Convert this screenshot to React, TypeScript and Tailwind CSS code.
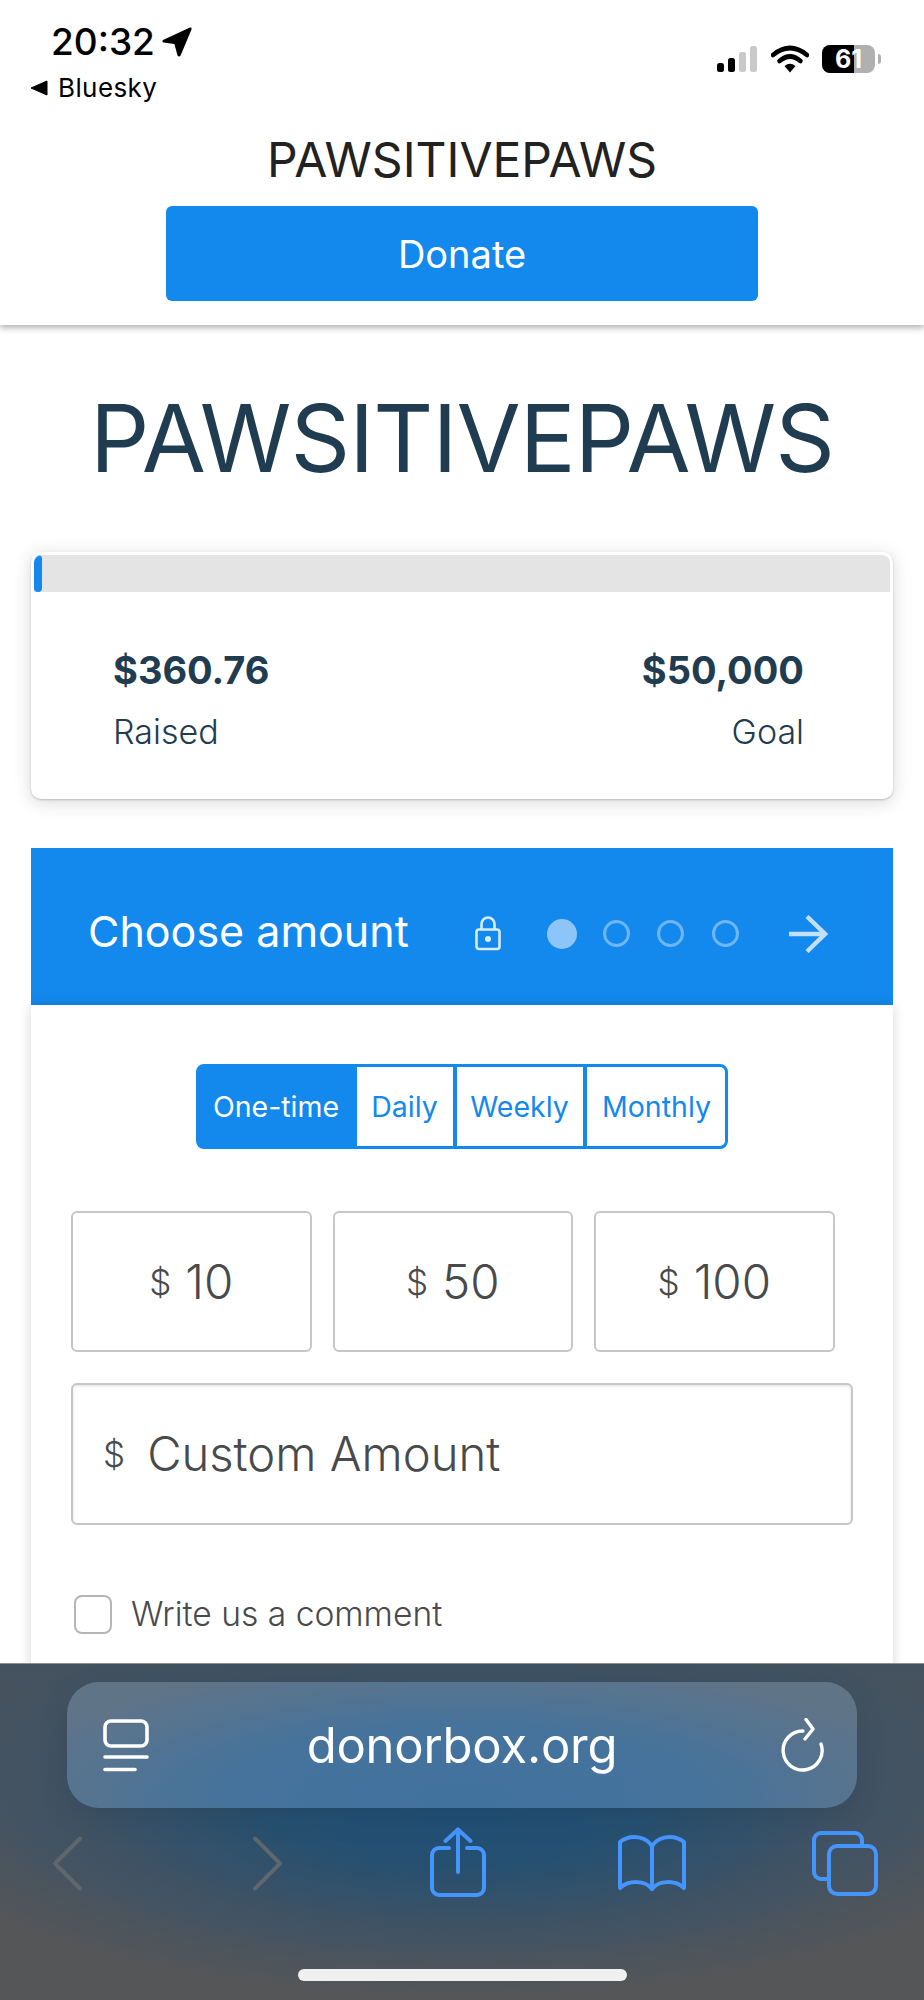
import React from "react";

const amounts = ["10", "50", "100"];

function StatusBar() {
  return (
    <div className="flex justify-between h-[130px]">
      <div className="pl-[30px] pt-[21px]">
        <div className="flex items-center pl-[21px] gap-[7px] h-[42px]">
          <span className="text-[37px] leading-[42px] font-medium text-black">20:32</span>
          <svg width="30" height="30" viewBox="0 0 29 29">
            <path d="M27 0.5 L1 12.5 Q-0.5 14 1.5 15 L12 16.5 L15 27.5 Q16.5 29.5 18 27.5 L28.5 2.5 Q29 0 27 0.5 Z" fill="#000" />
          </svg>
        </div>
        <div className="flex items-center gap-[10px] h-[32px] mt-[9px]">
          <svg width="18" height="16" viewBox="0 0 18 16">
            <path d="M17 1 V15 L1 8 Z" fill="#000" stroke="#000" strokeLinejoin="round" />
          </svg>
          <span className="text-[26px] leading-[32px] tracking-[0.4px] text-black">Bluesky</span>
        </div>
      </div>
      <div className="flex items-start gap-[13px] pt-[45px] pr-[43px]">
        <svg width="41" height="28" viewBox="0 0 41 28">
          <rect x="0" y="18" width="7" height="9" rx="2.5" fill="#000" />
          <rect x="11" y="13" width="7" height="14" rx="2.5" fill="#000" />
          <rect x="22" y="7" width="7" height="20" rx="2.5" fill="#c9c9c9" />
          <rect x="33" y="1" width="7" height="26" rx="2.5" fill="#c9c9c9" />
        </svg>
        <svg width="38" height="28" viewBox="0 0 38 28">
          <path d="M2 10 Q19 -4 36 10" fill="none" stroke="#000" strokeWidth="4.6" strokeLinecap="round" />
          <path d="M8.5 16 Q19 7 29.5 16" fill="none" stroke="#000" strokeWidth="4.6" strokeLinecap="round" />
          <path d="M13.5 21 L19 27.5 L24.5 21 Q19 16.5 13.5 21 Z" fill="#000" />
        </svg>
        <div className="flex items-center gap-[3px]">
          <div className="relative w-[53px] h-[28px] rounded-[8px] overflow-hidden bg-[#b0b0b0] flex items-center justify-center">
            <div className="absolute left-0 top-0 bottom-0 w-[32px] bg-black" />
            <span className="relative text-[25px] leading-[28px] font-bold text-white">61</span>
          </div>
          <div className="w-[3px] h-[10px] rounded-r-full bg-[#b0b0b0]" />
        </div>
      </div>
    </div>
  );
}

function Header() {
  return (
    <div className="h-[325px] bg-white shadow-[0_3px_6px_rgba(0,0,0,0.3)] relative flex flex-col items-center">
      <div className="w-full">
        <StatusBar />
      </div>
      <h2 className="text-[48px] leading-[56px] font-normal text-[#222] mt-[2px]">PAWSITIVEPAWS</h2>
      <button className="mt-[18px] w-[592px] h-[95px] rounded-[6px] bg-[#1389ee] text-white text-[38px] leading-[46px]">
        Donate
      </button>
    </div>
  );
}

function ProgressCard() {
  return (
    <div className="mx-[31px] mt-[54px] h-[247px] rounded-[10px] bg-white p-[3px] shadow-[0_3px_18px_rgba(0,0,0,0.16),0_1px_2px_rgba(0,0,0,0.2)]">
      <div className="h-[37px] rounded-t-[8px] bg-[#e4e4e4] overflow-hidden">
        <div className="w-[8px] h-full rounded-[5px] bg-[#1389ee]" />
      </div>
      <div className="flex justify-between pl-[79px] pr-[86px] pt-[55px] text-[#1f3c50]">
        <div>
          <div className="text-[38px] leading-[46px] font-bold">$360.76</div>
          <div className="text-[34px] leading-[40px] mt-[19px] font-light">Raised</div>
        </div>
        <div className="text-right">
          <div className="text-[38px] leading-[46px] font-bold">$50,000</div>
          <div className="text-[34px] leading-[40px] mt-[19px] font-light">Goal</div>
        </div>
      </div>
    </div>
  );
}

function Stepper() {
  return (
    <div className="h-[157px] bg-[#1389ee] flex items-center pl-[57px]">
      <span className="text-[43px] leading-[52px] text-white w-[387px] mt-[9px]">Choose amount</span>
      <svg className="mt-[14px]" width="26" height="35" viewBox="0 0 26 34" fill="none" stroke="#d9ecfd" strokeWidth="2.6">
        <rect x="1.5" y="13" width="23" height="19.5" rx="2.5" />
        <path d="M6.5 13 V7.5 a6.5 6.5 0 0 1 13 0 V13" />
        <circle cx="13" cy="22.5" r="3" fill="#d9ecfd" stroke="none" />
      </svg>
      <div className="ml-[46px] mt-[14px] flex items-center gap-[27.5px]">
        <div className="w-[30px] h-[30px] rounded-full bg-[#8ec5f8] -mr-[2px]" />
        <div className="w-[27px] h-[27px] rounded-full border-[3px] border-[#6fb6f6]" />
        <div className="w-[27px] h-[27px] rounded-full border-[3px] border-[#6fb6f6]" />
        <div className="w-[27px] h-[27px] rounded-full border-[3px] border-[#6fb6f6]" />
      </div>
      <svg className="ml-[50px] mt-[14px]" width="39" height="38" viewBox="0 0 39 38" fill="none" stroke="#c3e0fb" strokeWidth="4.4">
        <path d="M0 19 H36" />
        <path d="M18 1.5 L36 19 L18 36.5" />
      </svg>
    </div>
  );
}

function FrequencyTabs() {
  return (
    <div className="flex justify-center text-[28.5px] leading-[35px]">
      <div className="flex h-[85px] w-[532px] border-[3px] border-[#1389ee] rounded-[8px] overflow-hidden bg-[#1389ee] gap-[4px] text-[#1389ee]">
        <div className="w-[154px] flex items-center justify-center text-white pl-[1px]">One-time</div>
        <div className="w-[96px] flex items-center justify-center bg-white">Daily</div>
        <div className="w-[126px] flex items-center justify-center bg-white">Weekly</div>
        <div className="flex-1 flex items-center justify-center bg-white pl-[2px]">Monthly</div>
      </div>
    </div>
  );
}

function AmountForm() {
  return (
    <div className="bg-white pl-[40px] pt-[59px] h-[700px] shadow-[0_0_12px_rgba(0,0,0,0.16)] text-[#484a4c]">
      <div className="mr-[41px]">
        <FrequencyTabs />
      </div>
      <div className="flex gap-[21px] mt-[62px]">
        {amounts.map((a) => (
          <div
            key={a}
            className="w-[240.5px] h-[141px] rounded-[6px] border-[2px] border-[#c6c6c6] flex items-center justify-center gap-[14px] font-light"
          >
            <span className="text-[35px] leading-[42px]">$</span>
            <span className="text-[47.5px] leading-[56px]">{a}</span>
          </div>
        ))}
      </div>
      <div className="mt-[31px] w-[782px] h-[142px] rounded-[6px] border-[2px] border-[#c6c6c6] shadow-[inset_0_1px_3px_rgba(0,0,0,0.12)] flex items-center pl-[30px] gap-[22px] font-light">
        <span className="text-[35px] leading-[42px]">$</span>
        <span className="text-[47.2px] leading-[58px]">Custom Amount</span>
      </div>
      <div className="mt-[68px] ml-[3px] flex items-center gap-[19px]">
        <div className="w-[38px] h-[39px] rounded-[8px] border-[2px] border-[#b5b5b5]" />
        <span className="text-[33.6px] leading-[42px] font-light">Write us a comment</span>
      </div>
    </div>
  );
}

function SafariBar() {
  return (
    <div className="absolute left-0 right-0 bottom-0 h-[337px] border-t border-[#8d8f91] bg-[#555658] bg-[radial-gradient(ellipse_580px_190px_at_50%_42%,#1e4f79_0%,#28506f_35%,rgba(60,82,102,0.85)_65%,rgba(85,86,88,0)_100%),linear-gradient(180deg,#44525f_0%,#4c545c_35%,#555658_70%)]">
      <div className="mx-[67px] mt-[18px] h-[126px] rounded-[32px] bg-[radial-gradient(ellipse_470px_135px_at_50%_90%,#41729e_0%,#45739c_50%,#607488_100%)] shadow-[0_8px_26px_rgba(30,50,70,0.22)] flex items-center justify-between pl-[36px] pr-[33px] relative">
        <svg className="mt-[2px]" width="46" height="54" viewBox="0 0 46 54" fill="none" stroke="#fff">
          <rect x="2" y="2" width="42" height="25" rx="6" strokeWidth="3.6" />
          <path d="M2 38 H44" strokeWidth="3.6" strokeLinecap="round" />
          <path d="M2 50.5 H32" strokeWidth="3.6" strokeLinecap="round" />
        </svg>
        <span className="text-[49px] leading-[60px] text-white mt-[1px] mr-[5px] tracking-[-0.2px]">donorbox.org</span>
        <svg width="44" height="54" viewBox="0 0 44 54" fill="none" stroke="#fff" strokeWidth="3.4" strokeLinecap="round" strokeLinejoin="round">
          <path d="M23 13 A19.5 19.5 0 1 0 41 26" />
          <path d="M26 1.5 L33 11 L25 21" />
        </svg>
      </div>
      <div className="flex items-start pl-[52px] mt-[19px]">
        <svg className="mt-[9px]" width="31" height="55" viewBox="0 0 31 55" fill="none" stroke="#5f676e" strokeWidth="4" strokeLinecap="round" strokeLinejoin="round">
          <path d="M28 2.5 L3 27.5 L28 52.5" />
        </svg>
        <svg className="ml-[169px] mt-[9px]" width="31" height="55" viewBox="0 0 31 55" fill="none" stroke="#5f676e" strokeWidth="4" strokeLinecap="round" strokeLinejoin="round">
          <path d="M3 2.5 L28 27.5 L3 52.5" />
        </svg>
        <svg className="ml-[147px]" width="56" height="70" viewBox="0 0 56 70" fill="none" stroke="#4595ff" strokeWidth="4" strokeLinecap="round" strokeLinejoin="round">
          <path d="M19 21 H9 a7 7 0 0 0 -7 7 V61 a7 7 0 0 0 7 7 H47 a7 7 0 0 0 7 -7 V28 a7 7 0 0 0 -7 -7 H37" />
          <path d="M28 45 V2.5" />
          <path d="M15.5 14 L28 2.5 L40.5 14" />
        </svg>
        <svg className="ml-[131px] mt-[7px]" width="70" height="58" viewBox="0 0 70 58" fill="none" stroke="#4595ff" strokeWidth="4" strokeLinecap="round" strokeLinejoin="round">
          <path d="M35 13 C31 3 14 -1 3 8 V54 C12 46 28 46 35 55 C42 46 58 46 67 54 V8 C56 -1 39 3 35 13 Z" />
          <path d="M35 13 V55" />
        </svg>
        <svg className="ml-[125px] mt-[4px]" width="66" height="65" viewBox="0 0 66 65" fill="none" stroke="#4595ff" strokeWidth="4" strokeLinejoin="round">
          <path d="M15 48 H9 a7 7 0 0 1 -7 -7 V9 a7 7 0 0 1 7 -7 H43 a7 7 0 0 1 7 7 V15" />
          <rect x="17" y="15" width="47" height="48" rx="8" />
        </svg>
      </div>
      <div className="absolute left-[298px] bottom-[19px] w-[329px] h-[12px] rounded-full bg-[#f0f0f0]" />
    </div>
  );
}

export default function App() {
  return (
    <div className="relative h-[2000px] overflow-hidden bg-white font-[Inter,sans-serif]">
      <Header />
      <h1 className="text-center text-[93px] leading-[120px] font-normal text-[#1f3c50] mt-[53px] tracking-[-0.9px]">PAWSITIVEPAWS</h1>
      <ProgressCard />
      <div className="mx-[31px] mt-[49px]">
        <Stepper />
        <AmountForm />
      </div>
      <SafariBar />
    </div>
  );
}
